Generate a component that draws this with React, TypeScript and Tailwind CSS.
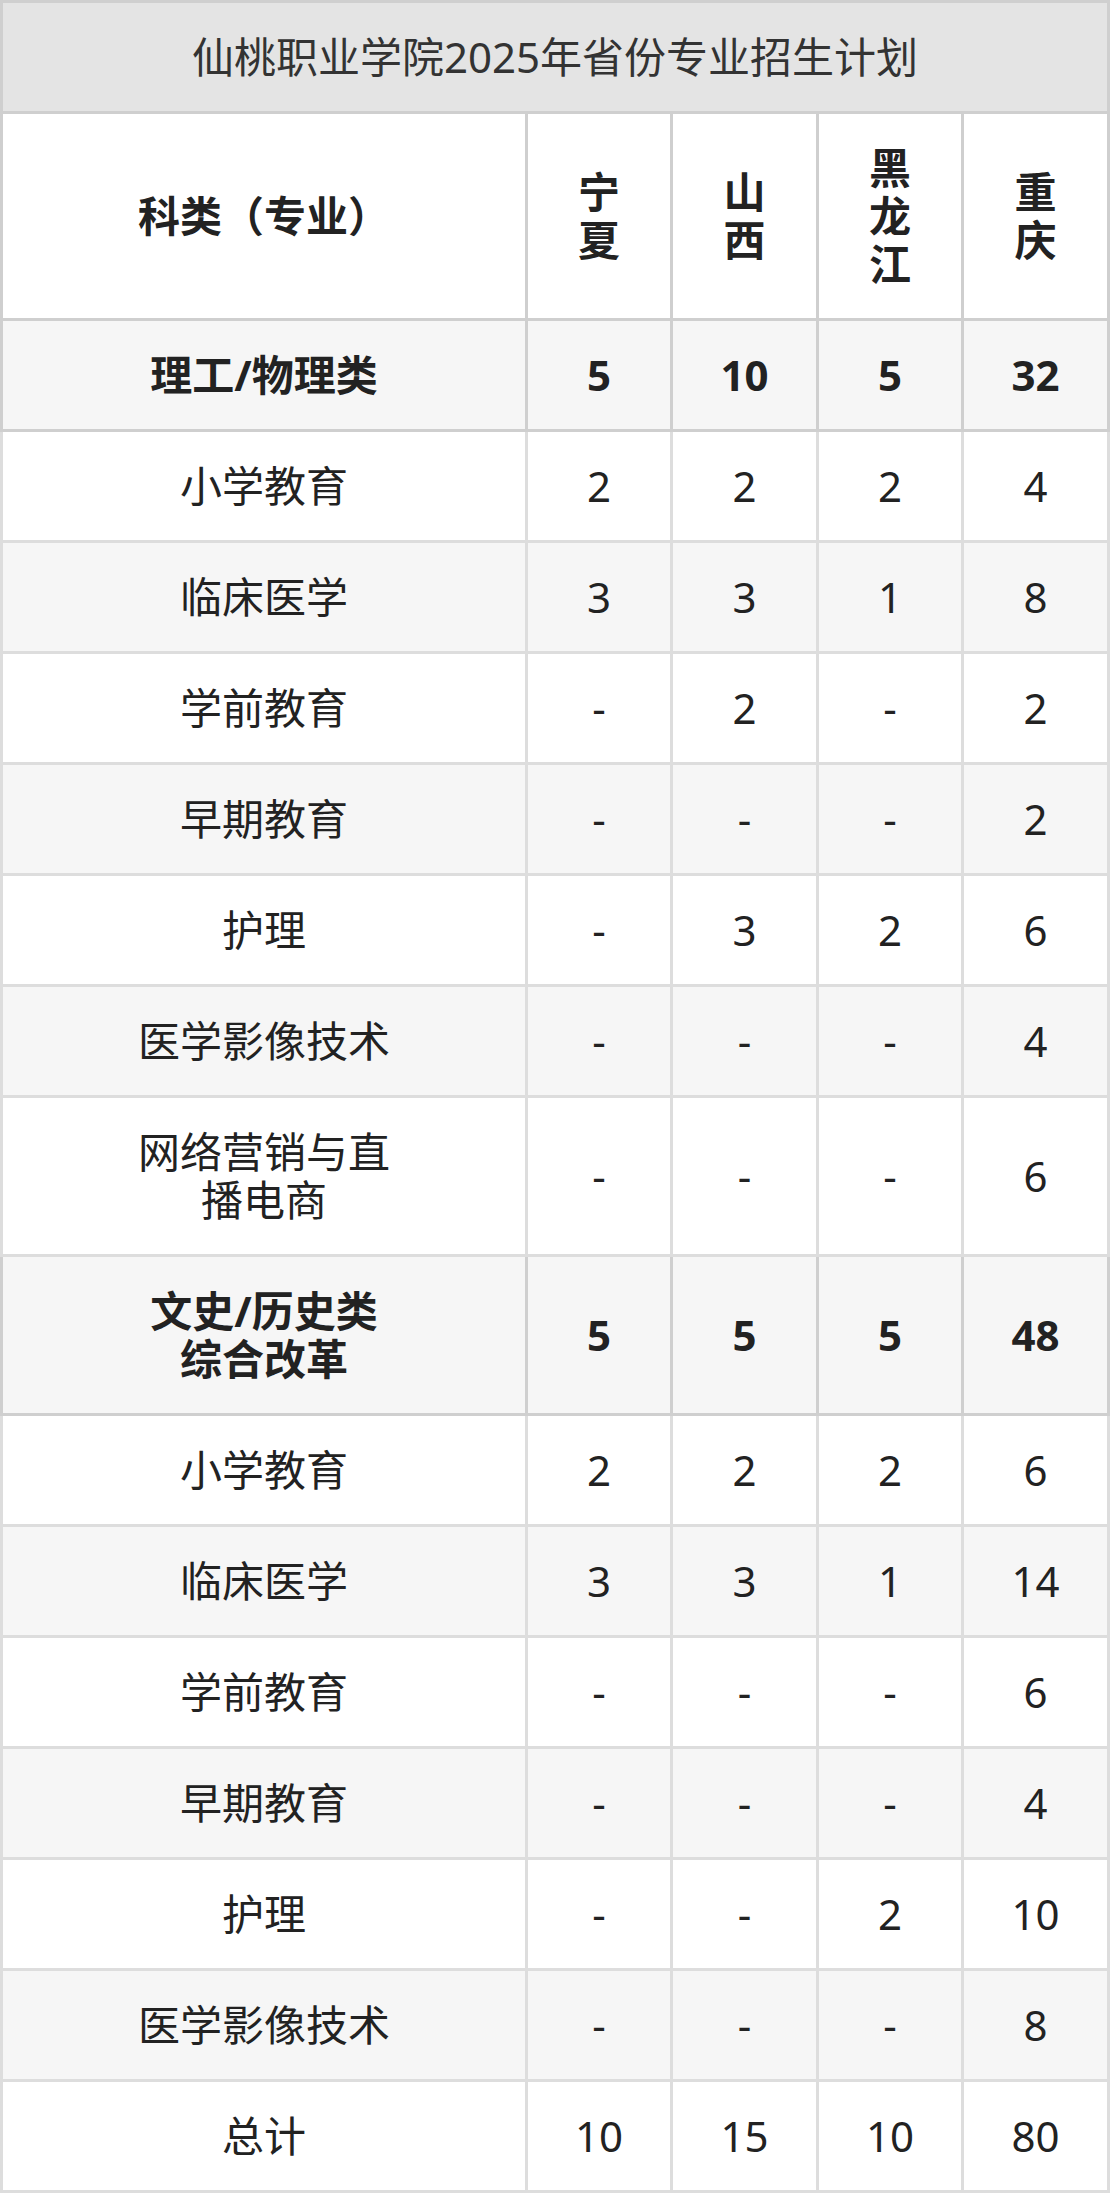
const FONT = "font-['Noto_Sans','Noto_Sans_CJK_SC',sans-serif]";

type Row = {
  name: string[];
  values: string[];
  strong?: boolean;
};

const PROVINCES = [["宁", "夏"], ["山", "西"], ["黑", "龙", "江"], ["重", "庆"]];

const ROWS: Row[] = [
  { name: ["理工/物理类"], values: ["5", "10", "5", "32"], strong: true },
  { name: ["小学教育"], values: ["2", "2", "2", "4"] },
  { name: ["临床医学"], values: ["3", "3", "1", "8"] },
  { name: ["学前教育"], values: ["-", "2", "-", "2"] },
  { name: ["早期教育"], values: ["-", "-", "-", "2"] },
  { name: ["护理"], values: ["-", "3", "2", "6"] },
  { name: ["医学影像技术"], values: ["-", "-", "-", "4"] },
  { name: ["网络营销与直", "播电商"], values: ["-", "-", "-", "6"] },
  { name: ["文史/历史类", "综合改革"], values: ["5", "5", "5", "48"], strong: true },
  { name: ["小学教育"], values: ["2", "2", "2", "6"] },
  { name: ["临床医学"], values: ["3", "3", "1", "14"] },
  { name: ["学前教育"], values: ["-", "-", "-", "6"] },
  { name: ["早期教育"], values: ["-", "-", "-", "4"] },
  { name: ["护理"], values: ["-", "-", "2", "10"] },
  { name: ["医学影像技术"], values: ["-", "-", "-", "8"] },
  { name: ["总计"], values: ["10", "15", "10", "80"] },
];

const CELL = "border-[3px] px-2 py-[30px] text-center align-middle leading-[48px]";

export default function App() {
  return (
    <div className={`${FONT} w-[1110px] bg-white text-[42px] text-[#222]`}>
      <table className="w-full table-fixed border-collapse">
        <colgroup>
          <col className="w-[525px]" />
          <col className="w-[145px]" />
          <col className="w-[146px]" />
          <col className="w-[145px]" />
          <col />
        </colgroup>
        <thead>
          <tr>
            <th
              colSpan={5}
              className={`${CELL} border-[#cfcfcf] bg-[#e4e4e4] font-normal text-[#333]`}
            >
              仙桃职业学院2025年省份专业招生计划
            </th>
          </tr>
          <tr className="bg-white">
            <th className={`${CELL} border-[#cfcfcf] font-bold`}>科类（专业）</th>
            {PROVINCES.map((chars) => (
              <th key={chars.join("")} className={`${CELL} border-[#cfcfcf] font-bold`}>
                {chars.map((c) => (
                  <span key={c} className="block">
                    {c}
                  </span>
                ))}
              </th>
            ))}
          </tr>
        </thead>
        <tbody>
          {ROWS.map((row, i) => {
            const bg = i % 2 === 0 ? "bg-[#f6f6f6]" : "bg-white";
            const border = row.strong ? "border-[#cfcfcf]" : "border-[#dddddd]";
            const weight = row.strong ? "font-bold" : "font-normal";
            return (
              <tr key={`${row.name.join("")}-${i}`} className={bg}>
                <td className={`${CELL} ${border} ${weight}`}>
                  {row.name.map((line) => (
                    <span key={line} className="block">
                      {line}
                    </span>
                  ))}
                </td>
                {row.values.map((v, j) => (
                  <td key={j} className={`${CELL} ${border} ${weight}`}>
                    {v}
                  </td>
                ))}
              </tr>
            );
          })}
        </tbody>
      </table>
    </div>
  );
}
